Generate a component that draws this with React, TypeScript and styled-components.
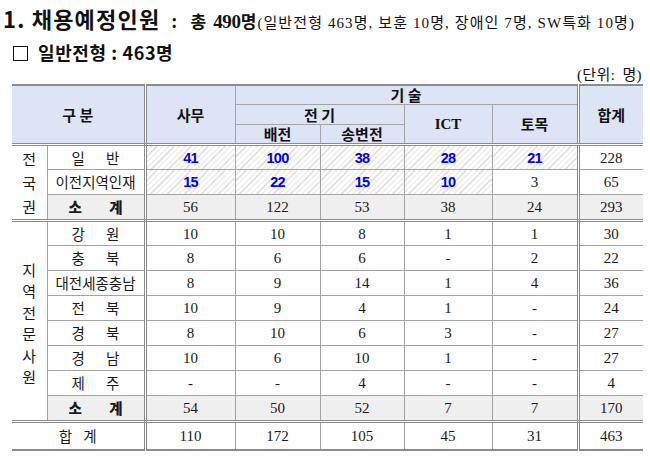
import React from "react";
import styled, { createGlobalStyle, css } from "styled-components";

const GlobalStyle = createGlobalStyle`
  html, body { margin: 0; padding: 0; background: #ffffff; }
  body { font-family: "Liberation Serif", "Noto Sans CJK KR", serif; color: #111; }
`;

const KR = `"Noto Sans CJK KR", sans-serif`;
const SERIF = `"Liberation Serif", "Noto Sans CJK KR", serif`;

const Page = styled.div`
  width: 650px;
  height: 458px;
  box-sizing: border-box;
  padding: 2px 7px 0 3px;
  overflow: hidden;
`;

const TitleRow = styled.div`
  display: flex;
  align-items: baseline;
  white-space: nowrap;
  height: 30px;
`;

const MainTitle = styled.span`
  font-family: ${KR};
  font-weight: 700;
  font-size: 22px;
  letter-spacing: 1.2px;
`;

const Total = styled.span`
  font-family: ${KR};
  font-weight: 700;
  font-size: 17px;
  margin-left: 11px;
  letter-spacing: 0px;
  word-spacing: 3px;
`;

const TotalNum = styled.span`
  font-family: ${SERIF};
  font-weight: 700;
  font-size: 19px;
  letter-spacing: -0.3px;
`;

const Breakdown = styled.span`
  font-family: ${SERIF};
  font-size: 15px;
  letter-spacing: 1.1px;
  margin-left: 1px;
`;

const SubTitle = styled.div`
  display: flex;
  align-items: center;
  font-family: ${KR};
  font-weight: 700;
  font-size: 18px;
  margin: 5px 0 0 9px;
  height: 30px;
  letter-spacing: 0.6px;
  white-space: pre;
`;

const Checkbox = styled.span`
  display: inline-block;
  box-sizing: border-box;
  width: 15px;
  height: 15px;
  border: 1.5px solid #111;
  margin: 2px 10px 0 1px;
`;

const Unit = styled.div`
  font-family: ${SERIF};
  font-size: 15px;
  letter-spacing: 0.4px;
  word-spacing: 3px;
  text-align: right;
  height: 17px;
  line-height: 17px;
  margin-right: 1px;
`;

const Table = styled.table`
  border-collapse: collapse;
  table-layout: fixed;
  width: 631px;
  margin-left: 9px;
  border-top: 2px solid #8c8c8c;
  border-bottom: 2px solid #8c8c8c;
`;

const THIN = "1px solid #a4a4a4";
const DBL = "3px double #8c8c8c";

type CellProps = {
  $first?: boolean;
  $last?: boolean;
  $dblRight?: boolean;
  $dblBottom?: boolean;
};

const cellBase = css<CellProps>`
  border: ${THIN};
  padding: 0;
  text-align: center;
  vertical-align: middle;
  overflow: hidden;
  white-space: nowrap;
  ${(p) => p.$first && css`border-left: none;`}
  ${(p) => p.$last && css`border-right: none;`}
  ${(p) => p.$dblRight && css`border-right: ${DBL};`}
  ${(p) => p.$dblBottom && css`border-bottom: ${DBL};`}
`;

const HeadCell = styled.th<CellProps & { $latin?: boolean }>`
  ${cellBase};
  background: #dde4f5;
  font-family: ${(p) => (p.$latin ? SERIF : KR)};
  font-weight: 700;
  font-size: 15px;
  line-height: 18px;
  color: #111;
`;

const HeadRow = styled.tr<{ $h: number }>`
  height: ${(p) => p.$h}px;
`;

const BodyRow = styled.tr<{ $h: number; $sub?: boolean }>`
  height: ${(p) => p.$h}px;
  & > td {
    background: ${(p) => (p.$sub ? "#efefef" : "#ffffff")};
  }
`;

const Cell = styled.td<CellProps & { $hatch?: boolean; $blue?: boolean }>`
  ${cellBase};
  font-family: ${SERIF};
  font-size: 15px;
  line-height: 18px;
  color: #1a1a1a;
  ${(p) =>
    p.$blue &&
    css`
      color: #0000f0;
      font-family: "Liberation Sans", sans-serif;
      font-weight: 700;
      font-size: 14.5px;
      letter-spacing: -0.8px;
    `}
  ${(p) =>
    p.$hatch &&
    css`
      && {
        background: repeating-linear-gradient(
          135deg,
          #ffffff 0px,
          #ffffff 3px,
          #d8d8d8 3px,
          #d8d8d8 4px
        );
      }
    `}
`;

const GroupCell = styled.td<CellProps>`
  ${cellBase};
  background: #ffffff;
  border-left: none;
`;

const Vertical = styled.div<{ $lh: number; $shift: number }>`
  display: flex;
  flex-direction: column;
  align-items: center;
  font-family: ${KR};
  font-size: 15px;
  line-height: ${(p) => p.$lh}px;
  color: #1a1a1a;
  margin-top: ${(p) => p.$shift}px;
`;

const Label = styled.td<CellProps & { $bold?: boolean; $gap: number }>`
  ${cellBase};
  font-family: ${KR};
  font-size: 14.5px;
  line-height: 18px;
  font-weight: ${(p) => (p.$bold ? 800 : 400)};
  color: #1a1a1a;
  letter-spacing: ${(p) => p.$gap}px;
  text-indent: ${(p) => p.$gap}px;
`;

const cols = [35, 98, 90, 85, 84, 88, 86, 65];

type DataRow = {
  label: string;
  gap: number;
  vals: (string | number)[];
  hatch?: boolean[];
};

const national: DataRow[] = [
  { label: "일 반", gap: 9, vals: [41, 100, 38, 28, 21, 228], hatch: [true, true, true, true, true, false] },
  { label: "이전지역인재", gap: 0, vals: [15, 22, 15, 10, 3, 65], hatch: [true, true, true, true, false, false] },
];

const regional: DataRow[] = [
  { label: "강 원", gap: 9, vals: [10, 10, 8, 1, 1, 30] },
  { label: "충 북", gap: 9, vals: [8, 6, 6, "-", 2, 22] },
  { label: "대전세종충남", gap: 0, vals: [8, 9, 14, 1, 4, 36] },
  { label: "전 북", gap: 9, vals: [10, 9, 4, 1, "-", 24] },
  { label: "경 북", gap: 9, vals: [8, 10, 6, 3, "-", 27] },
  { label: "경 남", gap: 9, vals: [10, 6, 10, 1, "-", 27] },
  { label: "제 주", gap: 9, vals: ["-", "-", 4, "-", "-", 4] },
];

const ValueCells: React.FC<{ vals: (string | number)[]; hatch?: boolean[]; dblBottom?: boolean }> = ({
  vals,
  hatch,
  dblBottom,
}) => (
  <>
    {vals.map((v, i) => (
      <Cell
        key={i}
        $hatch={hatch?.[i]}
        $blue={hatch?.[i]}
        $dblRight={i === 4}
        $last={i === 5}
        $dblBottom={dblBottom}
      >
        {v}
      </Cell>
    ))}
  </>
);

export default function App() {
  return (
    <Page>
      <GlobalStyle />
      <TitleRow>
        <MainTitle>1. 채용예정인원</MainTitle>
        <Total>
          :&nbsp; 총 <TotalNum>490</TotalNum>명
        </Total>
        <Breakdown>(일반전형 463명, 보훈 10명, 장애인 7명, SW특화 10명)</Breakdown>
      </TitleRow>
      <SubTitle>
        <Checkbox />
        일반전형 : 463명
      </SubTitle>
      <Unit>(단위: 명)</Unit>
      <Table>
        <colgroup>
          {cols.map((w, i) => (
            <col key={i} style={{ width: w }} />
          ))}
        </colgroup>
        <thead>
          <HeadRow $h={19}>
            <HeadCell colSpan={2} rowSpan={3} $first $dblRight $dblBottom>
              구 분
            </HeadCell>
            <HeadCell rowSpan={3} $dblBottom>
              사무
            </HeadCell>
            <HeadCell colSpan={4} $dblRight>
              기 술
            </HeadCell>
            <HeadCell rowSpan={3} $last $dblBottom>
              합계
            </HeadCell>
          </HeadRow>
          <HeadRow $h={20}>
            <HeadCell colSpan={2}>전 기</HeadCell>
            <HeadCell rowSpan={2} $latin $dblBottom>
              ICT
            </HeadCell>
            <HeadCell rowSpan={2} $dblRight $dblBottom>
              토목
            </HeadCell>
          </HeadRow>
          <HeadRow $h={19}>
            <HeadCell $dblBottom>배전</HeadCell>
            <HeadCell $dblBottom>송변전</HeadCell>
          </HeadRow>
        </thead>
        <tbody>
          {national.map((r, idx) => (
            <BodyRow $h={25} key={r.label}>
              {idx === 0 && (
                <GroupCell rowSpan={3} $dblBottom>
                  <Vertical $lh={24} $shift={0}>
                    <span>전</span>
                    <span>국</span>
                    <span>권</span>
                  </Vertical>
                </GroupCell>
              )}
              <Label $gap={r.gap} $dblRight>
                {r.label}
              </Label>
              <ValueCells vals={r.vals} hatch={r.hatch} />
            </BodyRow>
          ))}
          <BodyRow $h={26} $sub>
            <Label $gap={12} $bold $dblRight $dblBottom>
              소 계
            </Label>
            <ValueCells vals={[56, 122, 53, 38, 24, 293]} dblBottom />
          </BodyRow>
          {regional.map((r, idx) => (
            <BodyRow $h={25} key={r.label}>
              {idx === 0 && (
                <GroupCell rowSpan={8} $dblBottom>
                  <Vertical $lh={21.5} $shift={4}>
                    <span>지</span>
                    <span>역</span>
                    <span>전</span>
                    <span>문</span>
                    <span>사</span>
                    <span>원</span>
                  </Vertical>
                </GroupCell>
              )}
              <Label $gap={r.gap} $dblRight>
                {r.label}
              </Label>
              <ValueCells vals={r.vals} />
            </BodyRow>
          ))}
          <BodyRow $h={26} $sub>
            <Label $gap={12} $bold $dblRight $dblBottom>
              소 계
            </Label>
            <ValueCells vals={[54, 50, 52, 7, 7, 170]} dblBottom />
          </BodyRow>
          <BodyRow $h={28}>
            <Label colSpan={2} $gap={4} $first $dblRight>
              합 계
            </Label>
            <ValueCells vals={[110, 172, 105, 45, 31, 463]} />
          </BodyRow>
        </tbody>
      </Table>
    </Page>
  );
}
